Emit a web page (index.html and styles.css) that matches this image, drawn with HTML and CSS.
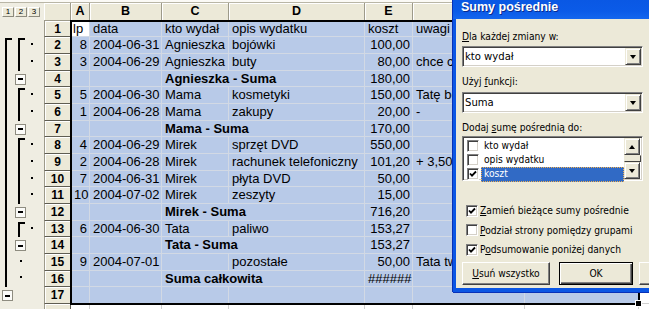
FILE: index.html
```html
<!DOCTYPE html>
<html lang="pl">
<head>
  <meta charset="UTF-8" />
  <title>Sumy pośrednie</title>
  <link rel="stylesheet" href="styles.css">
</head>
<body>
<div class="app">
  <div class="topstrip"></div>

  <div class="sheet">
    <!-- column headers -->
    <div class="levels"><span class="lvl">1</span><span class="lvl">2</span><span class="lvl">3</span></div>
    <div class="corner"></div>
    <div class="ch">A</div><div class="ch">B</div><div class="ch">C</div><div class="ch">D</div>
    <div class="ch">E</div><div class="ch"></div><div class="ch"></div><div class="ch"></div>

    <!-- 1 -->
    <div class="ol"></div>
    <div class="rh">1</div>
    <div class="c act">lp</div><div class="c">data</div><div class="c">kto wydał</div><div class="c">opis wydatku</div>
    <div class="c">koszt</div><div class="c">uwagi</div><div class="c"></div><div class="c out"></div>

    <!-- 2 -->
    <div class="ol"><span class="lane"><span class="brk"></span></span><span class="lane"><span class="brk"></span></span><span class="lane"><span class="dot"></span></span></div>
    <div class="rh">2</div>
    <div class="c r">8</div><div class="c">2004-06-31</div><div class="c">Agnieszka</div><div class="c">bojówki</div>
    <div class="c r">100,00</div><div class="c"></div><div class="c"></div><div class="c out"></div>

    <!-- 3 -->
    <div class="ol"><span class="lane"><span class="bar"></span></span><span class="lane"><span class="bar"></span></span><span class="lane"><span class="dot"></span></span></div>
    <div class="rh">3</div>
    <div class="c r">3</div><div class="c r">2004-06-29</div><div class="c">Agnieszka</div><div class="c">buty</div>
    <div class="c r">80,00</div><div class="c">chce coś</div><div class="c"></div><div class="c out"></div>

    <!-- 4 -->
    <div class="ol"><span class="lane"><span class="bar"></span></span><span class="lane"><span class="mb"></span></span></div>
    <div class="rh">4</div>
    <div class="c"></div><div class="c"></div><div class="c b w2">Agnieszka - Suma</div>
    <div class="c r">180,00</div><div class="c"></div><div class="c"></div><div class="c out"></div>

    <!-- 5 -->
    <div class="ol"><span class="lane"><span class="bar"></span></span><span class="lane"><span class="brk"></span></span><span class="lane"><span class="dot"></span></span></div>
    <div class="rh">5</div>
    <div class="c r">5</div><div class="c r">2004-06-30</div><div class="c">Mama</div><div class="c">kosmetyki</div>
    <div class="c r">150,00</div><div class="c">Tatę boli</div><div class="c"></div><div class="c out"></div>

    <!-- 6 -->
    <div class="ol"><span class="lane"><span class="bar"></span></span><span class="lane"><span class="bar"></span></span><span class="lane"><span class="dot"></span></span></div>
    <div class="rh">6</div>
    <div class="c r">1</div><div class="c r">2004-06-28</div><div class="c">Mama</div><div class="c">zakupy</div>
    <div class="c r">20,00</div><div class="c">-</div><div class="c"></div><div class="c out"></div>

    <!-- 7 -->
    <div class="ol"><span class="lane"><span class="bar"></span></span><span class="lane"><span class="mb"></span></span></div>
    <div class="rh">7</div>
    <div class="c"></div><div class="c"></div><div class="c b w2">Mama - Suma</div>
    <div class="c r">170,00</div><div class="c"></div><div class="c"></div><div class="c out"></div>

    <!-- 8 -->
    <div class="ol"><span class="lane"><span class="bar"></span></span><span class="lane"><span class="brk"></span></span><span class="lane"><span class="dot"></span></span></div>
    <div class="rh">8</div>
    <div class="c r">4</div><div class="c r">2004-06-29</div><div class="c">Mirek</div><div class="c">sprzęt DVD</div>
    <div class="c r">550,00</div><div class="c"></div><div class="c"></div><div class="c out"></div>

    <!-- 9 -->
    <div class="ol"><span class="lane"><span class="bar"></span></span><span class="lane"><span class="bar"></span></span><span class="lane"><span class="dot"></span></span></div>
    <div class="rh">9</div>
    <div class="c r">2</div><div class="c r">2004-06-28</div><div class="c">Mirek</div><div class="c">rachunek telefoniczny</div>
    <div class="c r">101,20</div><div class="c">+ 3,50 zł</div><div class="c"></div><div class="c out"></div>

    <!-- 10 -->
    <div class="ol"><span class="lane"><span class="bar"></span></span><span class="lane"><span class="bar"></span></span><span class="lane"><span class="dot"></span></span></div>
    <div class="rh">10</div>
    <div class="c r">7</div><div class="c">2004-06-31</div><div class="c">Mirek</div><div class="c">płyta DVD</div>
    <div class="c r">50,00</div><div class="c"></div><div class="c"></div><div class="c out"></div>

    <!-- 11 -->
    <div class="ol"><span class="lane"><span class="bar"></span></span><span class="lane"><span class="bar"></span></span><span class="lane"><span class="dot"></span></span></div>
    <div class="rh">11</div>
    <div class="c r">10</div><div class="c r">2004-07-02</div><div class="c">Mirek</div><div class="c">zeszyty</div>
    <div class="c r">15,00</div><div class="c"></div><div class="c"></div><div class="c out"></div>

    <!-- 12 -->
    <div class="ol"><span class="lane"><span class="bar"></span></span><span class="lane"><span class="mb"></span></span></div>
    <div class="rh">12</div>
    <div class="c"></div><div class="c"></div><div class="c b w2">Mirek - Suma</div>
    <div class="c r">716,20</div><div class="c"></div><div class="c"></div><div class="c out"></div>

    <!-- 13 -->
    <div class="ol"><span class="lane"><span class="bar"></span></span><span class="lane"><span class="brk"></span></span><span class="lane"><span class="dot"></span></span></div>
    <div class="rh">13</div>
    <div class="c r">6</div><div class="c r">2004-06-30</div><div class="c">Tata</div><div class="c">paliwo</div>
    <div class="c r">153,27</div><div class="c"></div><div class="c"></div><div class="c out"></div>

    <!-- 14 -->
    <div class="ol"><span class="lane"><span class="bar"></span></span><span class="lane"><span class="mb"></span></span></div>
    <div class="rh">14</div>
    <div class="c"></div><div class="c"></div><div class="c b w2">Tata - Suma</div>
    <div class="c r">153,27</div><div class="c"></div><div class="c"></div><div class="c out"></div>

    <!-- 15 -->
    <div class="ol"><span class="lane"><span class="bar"></span></span><span class="lane"><span class="dot mid"></span></span></div>
    <div class="rh">15</div>
    <div class="c r">9</div><div class="c r">2004-07-01</div><div class="c"></div><div class="c">pozostałe</div>
    <div class="c r">50,00</div><div class="c">Tata twierdzi</div><div class="c"></div><div class="c out"></div>

    <!-- 16 -->
    <div class="ol"><span class="lane"><span class="bar"></span></span><span class="lane"><span class="dot mid"></span></span></div>
    <div class="rh">16</div>
    <div class="c"></div><div class="c"></div><div class="c b w2">Suma całkowita</div>
    <div class="c r">######</div><div class="c"></div><div class="c"></div><div class="c out"></div>

    <!-- 17 -->
    <div class="ol"><span class="lane"><span class="mb"></span></span></div>
    <div class="rh">17</div>
    <div class="c"></div><div class="c"></div><div class="c"></div><div class="c"></div>
    <div class="c"></div><div class="c"></div><div class="c"></div><div class="c out"></div>

    <!-- 18 -->
    <div class="ol"></div>
    <div class="rh"></div>
    <div class="c out"></div><div class="c out"></div><div class="c out"></div><div class="c out"></div>
    <div class="c out"></div><div class="c out"></div><div class="c out"></div><div class="c out"></div>

    <div class="selection"></div>
  </div>

  <div class="dialog">
    <div class="titlebar">Sumy pośrednie</div>
    <div class="dlg-body">
      <div class="label"><u>D</u>la każdej zmiany w:</div>
      <div class="combo"><span class="combo-text">kto wydał</span><span class="drop"></span></div>

      <div class="label gap">Użyj <u>f</u>unkcji:</div>
      <div class="combo"><span class="combo-text">Suma</span><span class="drop"></span></div>

      <div class="label gap">Dodaj <u>s</u>umę pośrednią do:</div>
      <div class="listbox">
        <div class="items">
          <div class="item"><span class="chk"></span><span class="item-text">kto wydał</span></div>
          <div class="item"><span class="chk"></span><span class="item-text">opis wydatku</span></div>
          <div class="item"><span class="chk"><svg viewBox="0 0 8 8" width="8" height="8"><polyline points="1,3.5 3,5.6 7,1.5" fill="none" stroke="#000" stroke-width="1.8"/></svg></span><span class="item-text sel">koszt</span></div>
        </div>
        <div class="vscroll">
          <span class="sbtn"><span class="arrow up"></span></span>
          <span class="thumb"></span>
          <span class="sbtn"><span class="arrow down"></span></span>
        </div>
      </div>

      <div class="opts">
        <div class="opt"><span class="chk"><svg viewBox="0 0 8 8" width="8" height="8"><polyline points="1,3.5 3,5.6 7,1.5" fill="none" stroke="#000" stroke-width="1.8"/></svg></span><span><u>Z</u>amień bieżące sumy pośrednie</span></div>
        <div class="opt"><span class="chk"></span><span><u>P</u>odział strony pomiędzy grupami</span></div>
        <div class="opt"><span class="chk"><svg viewBox="0 0 8 8" width="8" height="8"><polyline points="1,3.5 3,5.6 7,1.5" fill="none" stroke="#000" stroke-width="1.8"/></svg></span><span>P<u>o</u>dsumowanie poniżej danych</span></div>
      </div>

      <div class="buttons">
        <span class="btn wide"><u>U</u>suń wszystko</span>
        <span class="btn default">OK</span>
        <span class="btn"></span>
      </div>
    </div>
  </div>
</div>
</body>
</html>
```

FILE: styles.css
```css
* {
  box-sizing: border-box;
}

html, body {
  margin: 0;
  padding: 0;
}

body {
  width: 649px;
  height: 309px;
  overflow: hidden;
  background: #efede2;
  font-family: "Liberation Sans", Arial, sans-serif;
  font-size: 13px;
  color: #000;
}

.app {
  position: relative;
  height: 309px;
}

.topstrip {
  height: 3px;
  background: #fbfaf6;
  border-bottom: 1px solid #b9b6a6;
}

/* ---------- sheet ---------- */

.sheet {
  position: relative;
  display: grid;
  grid-template-columns: 44px 27px 19px 72px 67px 136px 48px 112px 114px 40px;
  grid-template-rows: 17.8px repeat(17, 16.67px) 17px;
}

.levels {
  display: flex;
  gap: 1px;
  padding: 4px 0 0 2px;
  background: #efede2;
}

.lvl {
  width: 12px;
  height: 10px;
  border: 1px solid;
  border-color: #fff #8c8a7e #8c8a7e #fff;
  background: #ece9d8;
  font-size: 8px;
  line-height: 8px;
  text-align: center;
}

.corner,
.ch {
  background: #ece9d8;
  border-right: 1px solid #9d9a8a;
  border-bottom: 1px solid #9d9a8a;
  box-shadow: inset 1px 1px #fff;
}

.ch {
  font-weight: bold;
  font-size: 12.5px;
  line-height: 17px;
  text-align: center;
}

.rh {
  background: #ece9d8;
  border-left: 1px solid #9d9a8a;
  border-right: 1px solid #5f5d52;
  border-bottom: 1px solid #5f5d52;
  box-shadow: inset 1px 1px #fff;
  font-weight: bold;
  font-size: 12px;
  line-height: 16px;
  text-align: center;
}

.c {
  background: #b8cae8;
  border-right: 1px solid #d2d9e4;
  border-bottom: 1px solid #d2d9e4;
  padding: 0 2px 0 3px;
  white-space: nowrap;
  overflow: hidden;
  line-height: 16px;
}

.c.r { text-align: right; }
.c.b { font-weight: bold; }
.c.w2 { grid-column: span 2; }
.c.act { background: #fff; padding-left: 2px; }

.c.out {
  background: #fff;
  border-color: #d0d0d0;
}

.selection {
  position: absolute;
  grid-column: 3 / 10;
  grid-row: 2 / 19;
  top: -1px;
  left: -1px;
  right: -1px;
  bottom: -1px;
  border: 2px solid #000;
}

.selection::after {
  content: "";
  position: absolute;
  right: -4px;
  bottom: -4px;
  width: 5px;
  height: 5px;
  background: #000;
  border: 1px solid #fff;
}

/* outline lanes */

.ol {
  display: flex;
  padding-left: 2px;
  background: #efede2;
}

.lane {
  display: flex;
  width: 13px;
}

.bar {
  margin-left: 3px;
  width: 2px;
  background: #000;
}

.brk {
  margin: 1px 0 0 3px;
  width: 7px;
  border-left: 2px solid #000;
  border-top: 2px solid #000;
}

.dot {
  align-self: center;
  margin: 0 0 3px 3px;
  width: 2px;
  height: 2px;
  background: #000;
}

.dot.mid { margin-left: 5px; }

.mb {
  align-self: center;
  display: flex;
  align-items: center;
  justify-content: center;
  width: 11px;
  height: 11px;
  border: 1px solid #8e8c80;
  background: #fbfbf8;
}

.mb::before {
  content: "";
  width: 5px;
  height: 2px;
  background: #000;
}

/* ---------- dialog ---------- */

.dialog {
  position: absolute;
  left: 453px;
  top: 0;
  width: 260px;
  height: 292px;
  background: #ece9d8;
  border-left: 3px solid #0b56e4;
  border-bottom: 4px solid #0b56e4;
  box-shadow: -1px 0 #0831b8, 0 1px #0831b8;
  font-family: "DejaVu Sans Condensed", "DejaVu Sans", sans-serif;
  font-stretch: condensed;
  font-size: 10.2px;
}

.titlebar {
  height: 19px;
  margin-left: -3px;
  padding-left: 8px;
  background: linear-gradient(#0a58e4, #0b5be8 60%, #1466ee);
  color: #fff;
  font-family: "Liberation Sans", Arial, sans-serif;
  font-stretch: normal;
  font-weight: bold;
  font-size: 12.5px;
  line-height: 14px;
  text-shadow: 1px 1px #0a2a8c;
}

.dlg-body {
  padding: 12px 0 0 6px;
}

.label {
  height: 12px;
  line-height: 12px;
  margin-bottom: 3px;
}

.label.gap {
  margin-top: 9px;
  margin-bottom: 4px;
}

.label + .listbox {
  margin-top: -2px;
}

.combo,
.listbox {
  width: 181px;
  background: #fff;
  border: 1px solid;
  border-color: #808080 #fff #fff #808080;
  box-shadow: inset 1px 1px #404040, inset -1px -1px #d4d0c8;
}

.combo {
  display: flex;
  align-items: center;
  height: 21px;
  padding: 1px 1px 1px 2px;
  font-size: 11.2px;
}

.combo-text {
  flex: 1;
}

.drop,
.sbtn {
  display: flex;
  align-items: center;
  justify-content: center;
  width: 16px;
  height: 17px;
  background: #ece9d8;
  border: 1px solid;
  border-color: #ece9d8 #404040 #404040 #ece9d8;
  box-shadow: inset 1px 1px #fff, inset -1px -1px #808080;
}

.drop::before,
.arrow {
  content: "";
  width: 0;
  height: 0;
  border-left: 3.5px solid transparent;
  border-right: 3.5px solid transparent;
  border-top: 4px solid #000;
}

.arrow.up {
  border-top: 0;
  border-bottom: 4px solid #000;
}

.listbox {
  display: flex;
  height: 45px;
  padding: 2px 1px 1px 2px;
}

.items {
  flex: 1;
}

.item {
  display: flex;
  align-items: center;
  height: 14px;
  padding-left: 2px;
}

.item-text {
  flex: 1;
  margin-left: 2px;
  padding: 0 2px 1px;
  line-height: 12px;
  border: 1px solid transparent;
}

.item-text.sel {
  background: #316ac5;
  color: #fff;
  border: 1px dotted #f0b050;
}

.chk {
  display: flex;
  align-items: center;
  justify-content: center;
  flex: none;
  width: 12px;
  height: 12px;
  background: #fff;
  border: 1px solid;
  border-color: #808080 #fff #fff #808080;
  box-shadow: inset 1px 1px #404040, inset -1px -1px #d4d0c8;
}

.vscroll {
  display: flex;
  flex-direction: column;
  width: 17px;
  margin-top: -1px;
}

.thumb {
  flex: 1;
  background: #ece9d8;
  border: 1px solid;
  border-color: #ece9d8 #404040 #404040 #ece9d8;
}

.opts {
  margin-top: 20px;
}

.opt {
  display: flex;
  align-items: center;
  gap: 2px;
  height: 19.5px;
  padding-left: 4px;
}

.buttons {
  display: flex;
  margin-top: 2px;
}

.btn {
  display: flex;
  align-items: center;
  justify-content: center;
  flex: none;
  width: 74px;
  height: 23px;
  margin-right: 6px;
  background: #ece9d8;
  border: 1px solid;
  border-color: #fff #404040 #404040 #fff;
  box-shadow: inset -1px -1px #808080;
}

.btn.wide {
  width: 88px;
  margin-right: 9px;
}

.btn.default {
  border: 1px solid #000;
  box-shadow: inset 1px 1px #fff, inset -1px -1px #404040, inset -2px -2px #808080;
}
```
